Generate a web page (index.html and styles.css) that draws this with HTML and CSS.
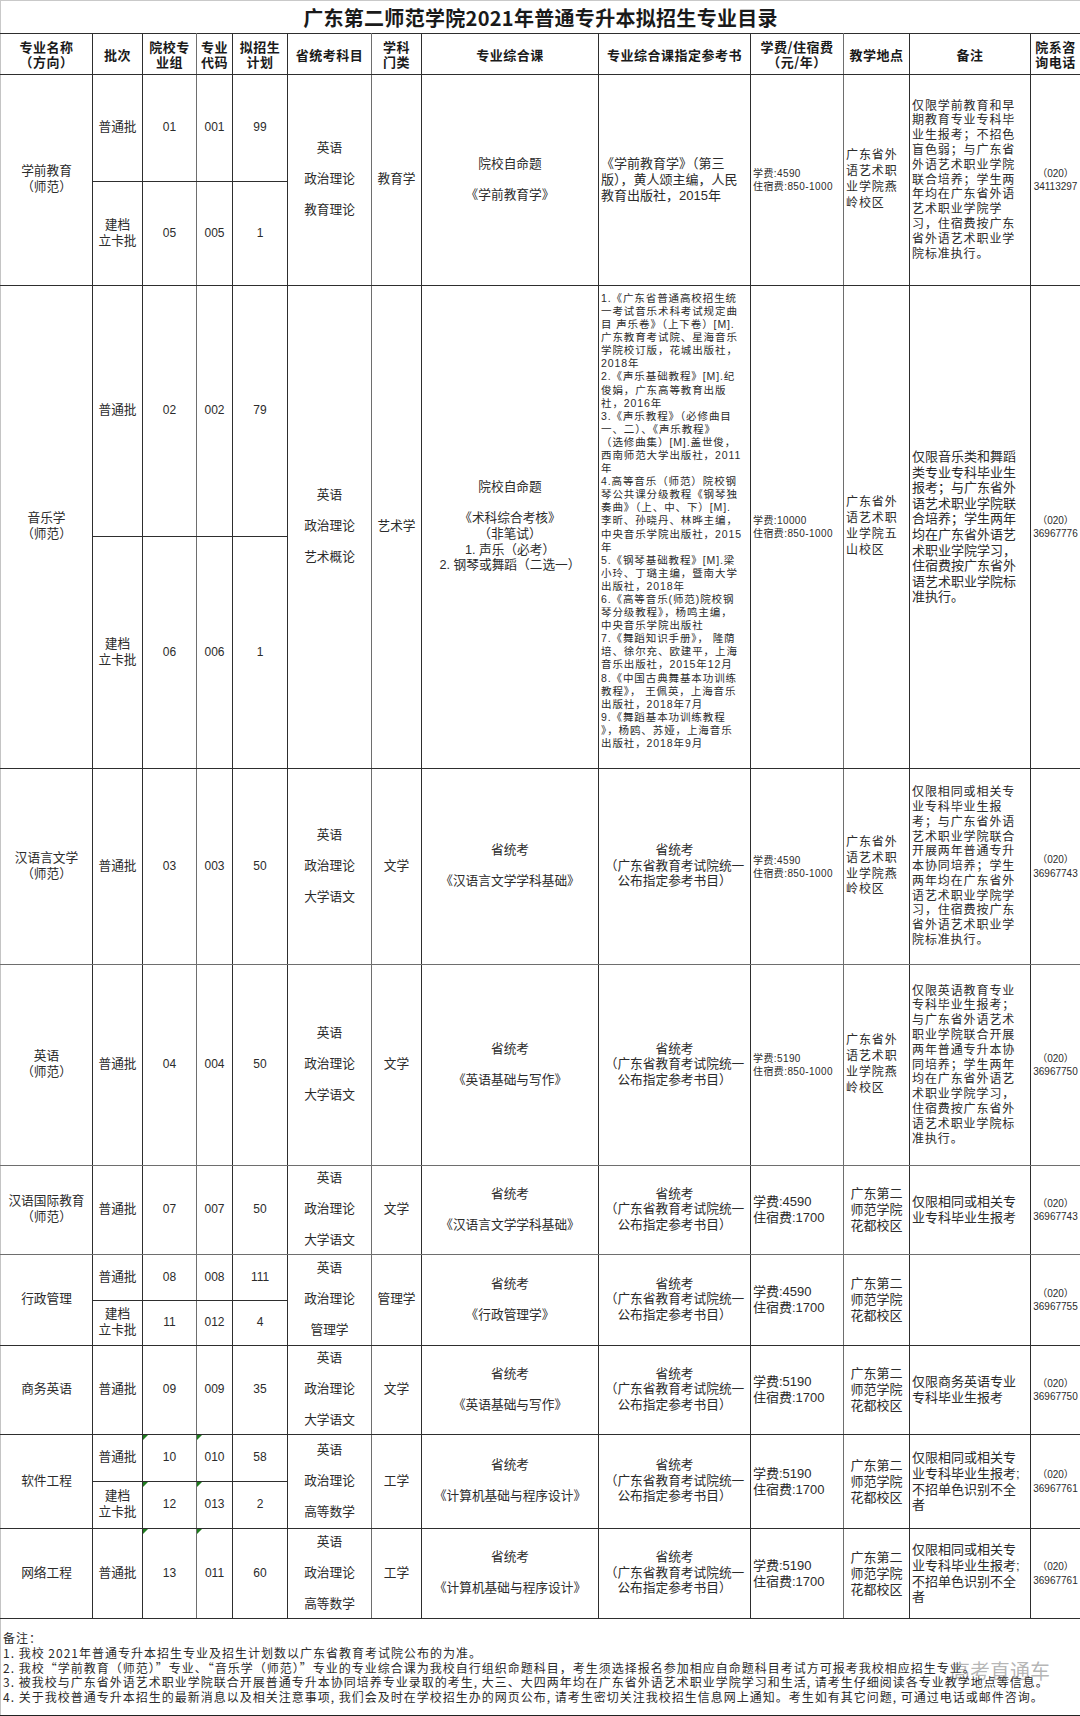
FILE: index.html
```html
<!DOCTYPE html>
<html lang="zh-CN">
<head>
<meta charset="utf-8">
<title>广东第二师范学院2021年普通专升本拟招生专业目录</title>
<link rel="stylesheet" href="styles.css">
</head>
<body>
<div class="page">
  <div class="title">广东第二师范学院2021年普通专升本拟招生专业目录</div>
  <table class="grid">
    <colgroup>
      <col class="w1"><col class="w2"><col class="w3"><col class="w4"><col class="w5"><col class="w6"><col class="w7"><col class="w8"><col class="w9"><col class="w10"><col class="w11"><col class="w12"><col class="w13">
    </colgroup>
    <tr class="rh">
      <th class="first">专业名称<br>（方向）</th>
      <th>批次</th>
      <th class="gr">院校专<br>业组</th>
      <th>专业<br>代码</th>
      <th>拟招生<br>计划</th>
      <th class="gr">省统考科目</th>
      <th>学科<br>门类</th>
      <th>专业综合课</th>
      <th>专业综合课指定参考书</th>
      <th class="gr">学费/住宿费<br>（元/年）</th>
      <th>教学地点</th>
      <th>备注</th>
      <th class="last">院系咨<br>询电话</th>
    </tr>

    <tr class="r1a">
      <td rowspan="2" class="first">学前教育<br>（师范）</td>
      <td>普通批</td><td class="num gr">01</td><td class="num">001</td><td class="num">99</td>
      <td rowspan="2" class="subj gr"><div>英语</div><div>政治理论</div><div>教育理论</div></td>
      <td rowspan="2">教育学</td>
      <td rowspan="2" class="course">院校自命题<br><br>《学前教育学》</td>
      <td rowspan="2" class="ref1">《学前教育学》（第三<br>版），黄人颂主编，人民<br>教育出版社，2015年</td>
      <td rowspan="2" class="fee gr">学费:4590<br>住宿费:850-1000</td>
      <td rowspan="2" class="loc">广东省外<br>语艺术职<br>业学院燕<br>岭校区</td>
      <td rowspan="2" class="note">仅限学前教育和早<br>期教育专业专科毕<br>业生报考；不招色<br>盲色弱；与广东省<br>外语艺术职业学院<br>联合培养；学生两<br>年均在广东省外语<br>艺术职业学院学<br>习，住宿费按广东<br>省外语艺术职业学<br>院标准执行。</td>
      <td rowspan="2" class="tel last">（020）<br>34113297</td>
    </tr>
    <tr class="r1b">
      <td>建档<br>立卡批</td><td class="num gr">05</td><td class="num">005</td><td class="num">1</td>
    </tr>

    <tr class="r2a">
      <td rowspan="2" class="first">音乐学<br>（师范）</td>
      <td>普通批</td><td class="num gr">02</td><td class="num">002</td><td class="num">79</td>
      <td rowspan="2" class="subj gr"><div>英语</div><div>政治理论</div><div>艺术概论</div></td>
      <td rowspan="2">艺术学</td>
      <td rowspan="2" class="course">院校自命题<br><br>《术科综合考核》<br>（非笔试）<br>1. 声乐（必考）<br>2. 钢琴或舞蹈（二选一）</td>
      <td rowspan="2" class="ref2">1.《广东省普通高校招生统<br>一考试音乐术科考试规定曲<br>目 声乐卷》（上下卷）[M].<br>广东教育考试院、星海音乐<br>学院校订版，花城出版社，<br>2018年<br>2.《声乐基础教程》[M].纪<br>俊娟，广东高等教育出版<br>社，2016年<br>3.《声乐教程》（必修曲目<br>一、二）、《声乐教程》<br>（选修曲集）[M].盖世俊，<br>西南师范大学出版社，2011<br>年<br>4.高等音乐（师范）院校钢<br>琴公共课分级教程《钢琴独<br>奏曲》（上、中、下）[M].<br>李昕、孙晓丹、林晔主编，<br>中央音乐学院出版社，2015<br>年<br>5.《钢琴基础教程》[M].梁<br>小玲、丁璐主编，暨南大学<br>出版社，2018年<br>6.《高等音乐(师范)院校钢<br>琴分级教程》，杨鸣主编，<br>中央音乐学院出版社<br>7.《舞蹈知识手册》， 隆荫<br>培、徐尔充、欧建平，上海<br>音乐出版社，2015年12月<br>8.《中国古典舞基本功训练<br>教程》， 王佩英，上海音乐<br>出版社，2018年7月<br>9.《舞蹈基本功训练教程<br>》，杨鸥、苏娅，上海音乐<br>出版社，2018年9月</td>
      <td rowspan="2" class="fee gr">学费:10000<br>住宿费:850-1000</td>
      <td rowspan="2" class="loc">广东省外<br>语艺术职<br>业学院五<br>山校区</td>
      <td rowspan="2" class="note2">仅限音乐类和舞蹈<br>类专业专科毕业生<br>报考；与广东省外<br>语艺术职业学院联<br>合培养；学生两年<br>均在广东省外语艺<br>术职业学院学习，<br>住宿费按广东省外<br>语艺术职业学院标<br>准执行。</td>
      <td rowspan="2" class="tel last">（020）<br>36967776</td>
    </tr>
    <tr class="r2b">
      <td class="gt">建档<br>立卡批</td><td class="num gr gt">06</td><td class="num gt">006</td><td class="num gt">1</td>
    </tr>

    <tr class="r3">
      <td class="first gb">汉语言文学<br>（师范）</td>
      <td class="gb">普通批</td><td class="num gr gb">03</td><td class="num gb">003</td><td class="num gb">50</td>
      <td class="subj gr gb"><div>英语</div><div>政治理论</div><div>大学语文</div></td>
      <td class="gb">文学</td>
      <td class="course gb">省统考<br><br>《汉语言文学学科基础》</td>
      <td class="course gb">省统考<br>（广东省教育考试院统一<br>公布指定参考书目）</td>
      <td class="fee gr gb">学费:4590<br>住宿费:850-1000</td>
      <td class="loc gb">广东省外<br>语艺术职<br>业学院燕<br>岭校区</td>
      <td class="note gb">仅限相同或相关专<br>业专科毕业生报<br>考；与广东省外语<br>艺术职业学院联合<br>开展两年普通专升<br>本协同培养；学生<br>两年均在广东省外<br>语艺术职业学院学<br>习，住宿费按广东<br>省外语艺术职业学<br>院标准执行。</td>
      <td class="tel last gb">（020）<br>36967743</td>
    </tr>

    <tr class="r4">
      <td class="first gb">英语<br>（师范）</td>
      <td class="gb">普通批</td><td class="num gr gb">04</td><td class="num gb">004</td><td class="num gb">50</td>
      <td class="subj gr gb"><div>英语</div><div>政治理论</div><div>大学语文</div></td>
      <td class="gb">文学</td>
      <td class="course gb">省统考<br><br>《英语基础与写作》</td>
      <td class="course gb">省统考<br>（广东省教育考试院统一<br>公布指定参考书目）</td>
      <td class="fee gr gb">学费:5190<br>住宿费:850-1000</td>
      <td class="loc gb">广东省外<br>语艺术职<br>业学院燕<br>岭校区</td>
      <td class="note gb">仅限英语教育专业<br>专科毕业生报考；<br>与广东省外语艺术<br>职业学院联合开展<br>两年普通专升本协<br>同培养；学生两年<br>均在广东省外语艺<br>术职业学院学习，<br>住宿费按广东省外<br>语艺术职业学院标<br>准执行。</td>
      <td class="tel last gb">（020）<br>36967750</td>
    </tr>

    <tr class="r5">
      <td class="first gb">汉语国际教育<br>（师范）</td>
      <td class="gb">普通批</td><td class="num gr gb">07</td><td class="num gb">007</td><td class="num gb">50</td>
      <td class="subj gr gb"><div>英语</div><div>政治理论</div><div>大学语文</div></td>
      <td class="gb">文学</td>
      <td class="course gb">省统考<br><br>《汉语言文学学科基础》</td>
      <td class="course gb">省统考<br>（广东省教育考试院统一<br>公布指定参考书目）</td>
      <td class="fee2 gr gb">学费:4590<br>住宿费:1700</td>
      <td class="loc2 gb">广东第二<br>师范学院<br>花都校区</td>
      <td class="note2 gb">仅限相同或相关专<br>业专科毕业生报考</td>
      <td class="tel last gb">（020）<br>36967743</td>
    </tr>

    <tr class="r6a">
      <td rowspan="2" class="first">行政管理</td>
      <td>普通批</td><td class="num gr">08</td><td class="num">008</td><td class="num">111</td>
      <td rowspan="2" class="subj gr"><div>英语</div><div>政治理论</div><div>管理学</div></td>
      <td rowspan="2">管理学</td>
      <td rowspan="2" class="course">省统考<br><br>《行政管理学》</td>
      <td rowspan="2" class="course">省统考<br>（广东省教育考试院统一<br>公布指定参考书目）</td>
      <td rowspan="2" class="fee2 gr">学费:4590<br>住宿费:1700</td>
      <td rowspan="2" class="loc2">广东第二<br>师范学院<br>花都校区</td>
      <td rowspan="2" class="note2"></td>
      <td rowspan="2" class="tel last">（020）<br>36967755</td>
    </tr>
    <tr class="r6b">
      <td>建档<br>立卡批</td><td class="num gr">11</td><td class="num">012</td><td class="num">4</td>
    </tr>

    <tr class="r7">
      <td class="first">商务英语</td>
      <td>普通批</td><td class="num gr">09</td><td class="num">009</td><td class="num">35</td>
      <td class="subj gr"><div>英语</div><div>政治理论</div><div>大学语文</div></td>
      <td>文学</td>
      <td class="course">省统考<br><br>《英语基础与写作》</td>
      <td class="course">省统考<br>（广东省教育考试院统一<br>公布指定参考书目）</td>
      <td class="fee2 gr">学费:5190<br>住宿费:1700</td>
      <td class="loc2">广东第二<br>师范学院<br>花都校区</td>
      <td class="note2">仅限商务英语专业<br>专科毕业生报考</td>
      <td class="tel last">（020）<br>36967750</td>
    </tr>

    <tr class="r8a">
      <td rowspan="2" class="first">软件工程</td>
      <td>普通批</td><td class="num tri gr">10</td><td class="num tri">010</td><td class="num">58</td>
      <td rowspan="2" class="subj gr"><div>英语</div><div>政治理论</div><div>高等数学</div></td>
      <td rowspan="2">工学</td>
      <td rowspan="2" class="course">省统考<br><br>《计算机基础与程序设计》</td>
      <td rowspan="2" class="course">省统考<br>（广东省教育考试院统一<br>公布指定参考书目）</td>
      <td rowspan="2" class="fee2 gr">学费:5190<br>住宿费:1700</td>
      <td rowspan="2" class="loc2">广东第二<br>师范学院<br>花都校区</td>
      <td rowspan="2" class="note2">仅限相同或相关专<br>业专科毕业生报考;<br>不招单色识别不全<br>者</td>
      <td rowspan="2" class="tel last">（020）<br>36967761</td>
    </tr>
    <tr class="r8b">
      <td>建档<br>立卡批</td><td class="num tri gr">12</td><td class="num tri">013</td><td class="num">2</td>
    </tr>

    <tr class="r9">
      <td class="first">网络工程</td>
      <td>普通批</td><td class="num tri gr">13</td><td class="num tri">011</td><td class="num">60</td>
      <td class="subj gr"><div>英语</div><div>政治理论</div><div>高等数学</div></td>
      <td>工学</td>
      <td class="course">省统考<br><br>《计算机基础与程序设计》</td>
      <td class="course">省统考<br>（广东省教育考试院统一<br>公布指定参考书目）</td>
      <td class="fee2 gr">学费:5190<br>住宿费:1700</td>
      <td class="loc2">广东第二<br>师范学院<br>花都校区</td>
      <td class="note2">仅限相同或相关专<br>业专科毕业生报考;<br>不招单色识别不全<br>者</td>
      <td class="tel last">（020）<br>36967761</td>
    </tr>

    <tr class="rn">
      <td colspan="13" class="notes first last">备注：<br>1. 我校 2021年普通专升本招生专业及招生计划数以广东省教育考试院公布的为准。<br>2. 我校“学前教育（师范）”专业、“音乐学（师范）”专业的专业综合课为我校自行组织命题科目，考生须选择报名参加相应自命题科目考试方可报考我校相应招生专业。<br>3. 被我校与广东省外语艺术职业学院联合开展普通专升本协同培养专业录取的考生, 大三、大四两年均在广东省外语艺术职业学院学习和生活, 请考生仔细阅读各专业教学地点等信息。<br>4. 关于我校普通专升本招生的最新消息以及相关注意事项, 我们会及时在学校招生办的网页公布, 请考生密切关注我校招生信息网上通知。考生如有其它问题, 可通过电话或邮件咨询。</td>
    </tr>
  </table>
  <div class="wm">高考直通车</div>
</div>
</body>
</html>
```

FILE: styles.css
```css
html, body {
  margin: 0;
  padding: 0;
  background: #ffffff;
}

body {
  font-family: "Liberation Sans", "Noto Sans CJK SC", sans-serif;
  color: #2b2b2b;
}

.page {
  position: relative;
  width: 1080px;
  height: 1716px;
  overflow: hidden;
}

.title {
  height: 33px;
  box-sizing: border-box;
  border-top: 1px solid #c9c9c9;
  border-left: 1px solid #c9c9c9;
  text-align: center;
  font-family: "Noto Sans CJK SC", sans-serif;
  font-weight: 700;
  font-size: 20px;
  line-height: 33px;
  letter-spacing: 0.3px;
  color: #1a1a1a;
}

.grid {
  width: 1080px;
  border-collapse: collapse;
  table-layout: fixed;
  font-size: 12.7px;
}

.w1 { width: 92px; }
.w2 { width: 50px; }
.w3 { width: 54px; }
.w4 { width: 36px; }
.w5 { width: 55px; }
.w6 { width: 84px; }
.w7 { width: 50px; }
.w8 { width: 177px; }
.w9 { width: 152px; }
.w10 { width: 93px; }
.w11 { width: 66px; }
.w12 { width: 121px; }
.w13 { width: 50px; }

.grid th,
.grid td {
  border: 1px solid #2e2e2e;
  padding: 0 1px;
  text-align: center;
  vertical-align: middle;
  line-height: 15.6px;
  white-space: nowrap;
  overflow: hidden;
}

.grid th {
  font-family: "Noto Sans CJK SC", sans-serif;
  font-weight: 700;
  font-size: 13px;
  line-height: 15px;
  letter-spacing: 0.5px;
  color: #1a1a1a;
}

/* lighter grid lines seen in the scan */
.grid .gr { border-right-color: #6e6e6e; }
.grid .gb { border-bottom-color: #6e6e6e; }
.grid .gt { border-top-color: #6e6e6e; }

.grid .first { border-left-color: #c4c4c4; }
.grid .last { border-right-color: #c4c4c4; }

.rh { height: 41px; }
.r1a { height: 107px; }
.r1b { height: 104px; }
.r2a { height: 251px; }
.r2b { height: 232px; }
.r3 { height: 196px; }
.r4 { height: 201px; }
.r5 { height: 89px; }
.r6a { height: 46px; }
.r6b { height: 45px; }
.r7 { height: 89px; }
.r8a { height: 47px; }
.r8b { height: 47px; }
.r9 { height: 90px; }
.rn { height: 97px; }

.num {
  font-family: "Liberation Sans", sans-serif;
  font-size: 12px;
}

.subj div {
  line-height: 15.5px;
}

.subj div + div {
  margin-top: 15.5px;
}

.course {
  line-height: 15.6px;
}

.grid .ref1 {
  text-align: left;
  padding-left: 2px;
  font-size: 13px;
  line-height: 15.7px;
}

.grid .ref2 {
  text-align: left;
  padding-left: 2px;
  padding-bottom: 12px;
  font-size: 10.5px;
  letter-spacing: 0.9px;
  line-height: 13.1px;
}

.grid .fee {
  text-align: left;
  padding-left: 2px;
  font-size: 10px;
  letter-spacing: 0.4px;
  line-height: 13px;
}

.grid .fee2 {
  text-align: left;
  padding-left: 2px;
  font-size: 13px;
  line-height: 16px;
}

.grid .loc {
  text-align: left;
  padding-left: 2px;
  font-size: 12px;
  letter-spacing: 0.9px;
  line-height: 15.8px;
}

.grid .loc2 {
  font-size: 13px;
  line-height: 16px;
}

.grid .note {
  text-align: left;
  padding-left: 2px;
  font-size: 12px;
  letter-spacing: 0.9px;
  line-height: 14.8px;
}

.grid .note2 {
  text-align: left;
  padding-left: 2px;
  font-size: 13px;
  line-height: 15.6px;
}

.grid .tel {
  font-size: 10px;
  line-height: 13.4px;
}

.grid .tri {
  position: relative;
}

.grid .tri::before {
  content: "";
  position: absolute;
  left: 0;
  top: 0;
  width: 0;
  height: 0;
  border-top: 5px solid #1e7b1e;
  border-right: 5px solid transparent;
}

.grid .notes {
  text-align: left;
  vertical-align: top;
  padding: 12px 2px 0 2px;
  font-family: "Noto Sans CJK SC", sans-serif;
  font-size: 12px;
  letter-spacing: 1px;
  line-height: 14.75px;
  border-bottom-color: #222222;
}

.wm {
  position: absolute;
  left: 950px;
  top: 1659px;
  font-family: "Noto Sans CJK SC", sans-serif;
  font-size: 20px;
  line-height: 24px;
  color: rgba(90, 90, 90, 0.45);
}
```
